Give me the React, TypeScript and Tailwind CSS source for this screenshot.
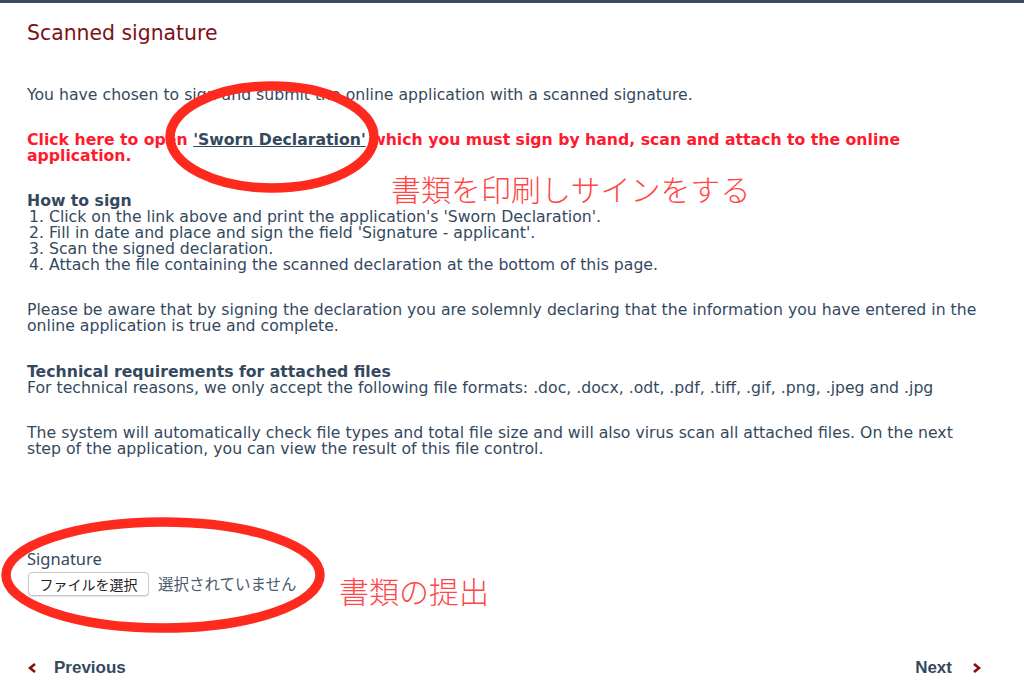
import React from "react";

export default function App() {
  return (
    <div className="relative w-[1024px] h-[700px] bg-white overflow-hidden border-t-[3px] border-[#3a4a63] text-[#34495e] [font-family:'DejaVu_Sans',Verdana,sans-serif]">
      <div className="px-[27px]">
        <h1 className="mt-[18px] text-[20.4px] leading-[24px] text-[#7d1015] font-normal">Scanned signature</h1>
        <p className="mt-[42px] text-[15.7px] leading-[16px]">
          You have chosen to sign and submit the online application with a scanned signature.
        </p>
        <p className="mt-[29px] text-[15.7px] leading-[16px] font-bold text-[#ff1a2e]">
          Click here to open <a className="underline text-[#34495e]">'Sworn Declaration'</a> which you must sign by hand, scan and attach to the online application.
        </p>
        <div className="mt-[29px] text-[15.7px] leading-[16px]">
          <div className="font-bold">How to sign</div>
          <div className="pl-[2px]">1. Click on the link above and print the application's 'Sworn Declaration'.</div>
          <div className="pl-[2px]">2. Fill in date and place and sign the field 'Signature - applicant'.</div>
          <div className="pl-[2px]">3. Scan the signed declaration.</div>
          <div className="pl-[2px]">4. Attach the file containing the scanned declaration at the bottom of this page.</div>
        </div>
        <p className="mt-[29px] text-[15.7px] leading-[16px]">
          Please be aware that by signing the declaration you are solemnly declaring that the information you have entered in the online application is true and complete.
        </p>
        <div className="mt-[30px] text-[15.7px] leading-[16px]">
          <div className="font-bold">Technical requirements for attached files</div>
          <div>For technical reasons, we only accept the following file formats: .doc, .docx, .odt, .pdf, .tiff, .gif, .png, .jpeg and .jpg</div>
        </div>
        <p className="mt-[29px] text-[15.7px] leading-[16px] pr-[40px]">
          The system will automatically check file types and total file size and will also virus scan all attached files. On the next step of the application, you can view the result of this file control.
        </p>
        <div className="mt-[93px] text-[16.5px] leading-[18px] [font-family:'Noto_Sans','Noto_Sans_CJK_JP',sans-serif]">Signature</div>
        <div className="mt-[4px] flex items-center gap-[9px]">
          <button className="ml-[1px] h-[24px] w-[121px] rounded-[4px] border border-[#c8c8c8] bg-white shadow-[0_1px_1px_rgba(0,0,0,0.12)] text-[14px] leading-[20px] text-[#222] [font-family:'Noto_Sans_CJK_JP',sans-serif]">ファイルを選択</button>
          <span className="text-[15.5px] text-[#4a5a6c] [font-family:'Noto_Sans_CJK_JP',sans-serif]">選択されていません</span>
        </div>
        <div className="mt-[62px] flex items-center justify-between [font-family:'Liberation_Sans',Arial,sans-serif] font-bold text-[17px] leading-[20px] text-[#34495e]">
          <div className="flex items-center gap-[17px]">
            <svg width="10" height="10" viewBox="0 0 10 10"><path d="M8 1 L3 5 L8 9" fill="none" stroke="#8b0d12" strokeWidth="2.6" /></svg>
            <span>Previous</span>
          </div>
          <div className="flex items-center gap-[20px] mr-[15px]">
            <span>Next</span>
            <svg width="10" height="10" viewBox="0 0 10 10"><path d="M2 1 L7 5 L2 9" fill="none" stroke="#8b0d12" strokeWidth="2.6" /></svg>
          </div>
        </div>
      </div>

      <svg className="absolute left-0 top-0 pointer-events-none" width="1024" height="700">
        <ellipse cx="272" cy="134" rx="102" ry="51" fill="none" stroke="#ff2a1e" strokeWidth="9.5" />
        <ellipse cx="163" cy="572" rx="157" ry="53" fill="none" stroke="#ff2a1e" strokeWidth="9.5" />
      </svg>
      <div className="absolute left-[391px] top-[167px] text-[30px] leading-[36px] text-[#ff4646] [font-family:'Noto_Sans_CJK_JP',sans-serif] font-light">書類を印刷しサインをする</div>
      <div className="absolute left-[339px] top-[569px] text-[30px] leading-[36px] text-[#ff4646] [font-family:'Noto_Sans_CJK_JP',sans-serif] font-light">書類の提出</div>
    </div>
  );
}
